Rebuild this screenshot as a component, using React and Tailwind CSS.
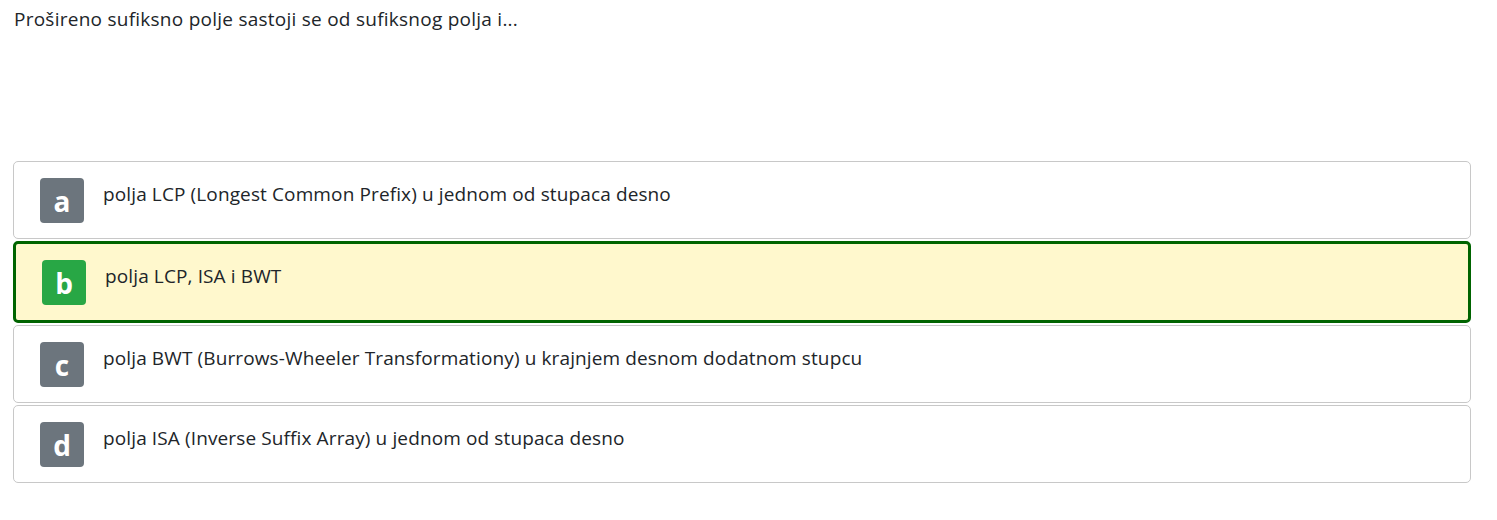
const options = [
  { key: "a", text: "polja LCP (Longest Common Prefix) u jednom od stupaca desno" },
  { key: "b", text: "polja LCP, ISA i BWT", selected: true },
  { key: "c", text: "polja BWT (Burrows-Wheeler Transformationy) u krajnjem desnom dodatnom stupcu" },
  { key: "d", text: "polja ISA (Inverse Suffix Array) u jednom od stupaca desno" },
];

export default function App() {
  return (
    <div
      className="w-[1497px] h-[520px] bg-white text-[#212529] pl-[13px] pr-[26px]"
      style={{ fontFamily: "'Open Sans', 'Noto Sans', sans-serif" }}
    >
      <p className="pt-[5px] pl-px text-[19px] leading-[28px] tracking-[0.25px]">
        Prošireno sufiksno polje sastoji se od sufiksnog polja i...
      </p>

      <div className="mt-[128px] flex flex-col gap-[2px]">
        {options.map((o) => (
          <div
            key={o.key}
            className={
              o.selected
                ? "flex items-start rounded-[5px] border-[3px] border-[#006400] bg-[#fff8cd] pt-4 pb-[15px] pl-[26px]"
                : "flex items-start rounded-[5px] border border-[#c8c8c8] bg-white pt-4 pb-[15px] pl-[26px]"
            }
          >
            <div
              className={
                o.selected
                  ? "flex h-[45px] w-[44px] shrink-0 items-center justify-center rounded-[4px] bg-[#28a745] text-[28px] font-bold text-white"
                  : "flex h-[45px] w-[44px] shrink-0 items-center justify-center rounded-[4px] bg-[#6c757d] text-[28px] font-bold text-white"
              }
            >
              {o.key}
            </div>
            <span className="ml-[19px] mt-px text-[19px] leading-[30px] tracking-[0.12px]">{o.text}</span>
          </div>
        ))}
      </div>
    </div>
  );
}
